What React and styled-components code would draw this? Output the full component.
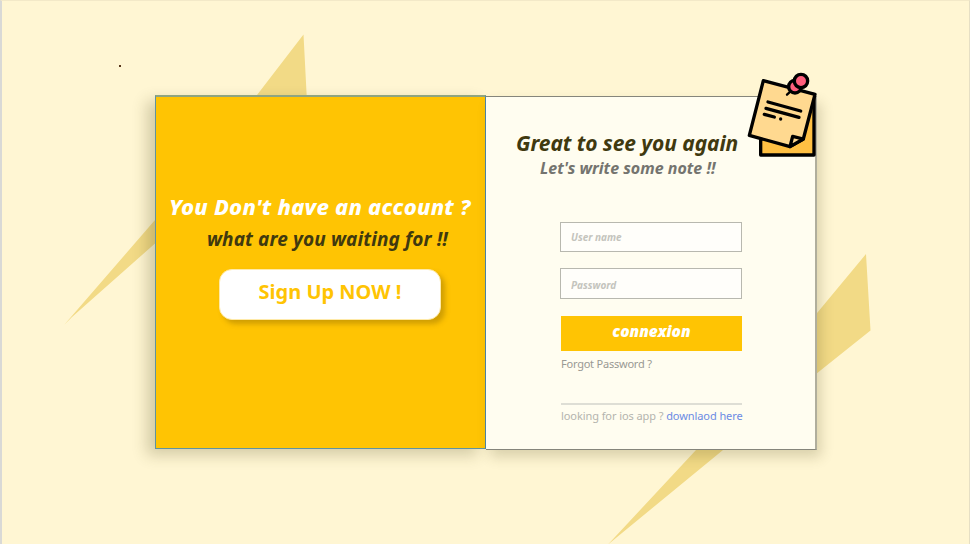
import React from "react";
import styled, { createGlobalStyle } from "styled-components";

const GlobalStyle = createGlobalStyle`
  * { box-sizing: border-box; }
  body { margin: 0; font-family: "Noto Sans", "Open Sans", sans-serif; }
`;

const Page = styled.main`
  position: relative;
  width: 970px;
  height: 544px;
  overflow: hidden;
  padding: 95px 0 0 153px;
  background: #fff6d3;
  border-left: 2px solid #d9d9d6;
  border-top: 1px solid #f3e9c8;
  border-right: 1px solid #e6dfc4;
`;

const Backdrop = styled.svg`
  position: absolute;
  left: -2px;
  top: -1px;
`;

const Card = styled.div`
  position: relative;
  display: flex;
  align-items: flex-start;
  width: 662px;
`;

const Panel = styled.section`
  display: flex;
  flex-direction: column;
  align-items: flex-start;
  flex: none;
`;

const SignUpPanel = styled(Panel)`
  width: 331px;
  height: 354px;
  margin-top: -1px;
  padding: 92px 0 0 13px;
  background: #ffc403;
  border: 1px solid #5f93a0;
  border-top: 2px solid #8fa581;
  border-right-color: #4d86a8;
  box-shadow: -8px 6px 14px rgba(70, 65, 20, 0.24);
`;

const LoginPanel = styled(Panel)`
  width: 331px;
  height: 354px;
  padding: 29px 0 0 30px;
  background: #fffdf0;
  border: 1px solid #85857b;
  border-left: 0;
  border-right: 2px solid #b0ae9c;
  box-shadow: 4px 7px 12px rgba(70, 65, 20, 0.2);
`;

const Line = styled.div`
  height: ${(p) => p.$height}px;
  line-height: ${(p) => p.$height}px;
  margin: ${(p) => p.$top || 0}px 0 0 ${(p) => p.$left || 0}px;
  font-size: ${(p) => p.$size}px;
  font-weight: ${(p) => p.$weight || 700};
  font-style: ${(p) => (p.$upright ? "normal" : "italic")};
  letter-spacing: ${(p) => p.$spacing || 0}px;
  color: ${(p) => p.$color};
  white-space: nowrap;
`;

const SignUpButton = styled.button`
  display: block;
  width: 222px;
  height: 51px;
  margin: 16px 0 0 50px;
  padding: 0 0 6px;
  border: 1px solid #ffeaa8;
  border-radius: 13px;
  background: #fff;
  box-shadow: 4px 4px 5px rgba(120, 90, 0, 0.35);
  color: #ffc403;
  font: 700 20px "Noto Sans", sans-serif;
`;

const Form = styled.form`
  display: flex;
  flex-direction: column;
  width: 182px;
  margin: 44px 0 0 44px;
`;

const Field = styled.input`
  width: 182px;
  height: ${(p) => p.$height}px;
  margin: 0 0 ${(p) => p.$gap}px;
  padding: ${(p) => p.$offset || 0}px 10px 0;
  border: 1px solid #b8b8af;
  border-radius: 0;
  background: #fffefa;
  font: italic 700 10px "Noto Sans", sans-serif;
  &::placeholder { color: #c4c4bd; opacity: 1; }
`;

const SubmitButton = styled.button`
  width: 181px;
  height: 35px;
  margin-left: 1px;
  padding: 0 0 5px;
  border: 0;
  background: #ffc403;
  color: #fff;
  font: italic 800 15.5px "Open Sans", sans-serif;
`;

const Divider = styled.hr`
  width: 181px;
  height: 2px;
  margin: 31px 0 0 1px;
  border: 0;
  background: #deded5;
`;

const Link = styled.a`
  color: #6c8be4;
`;

const NoteIcon = styled.svg`
  position: absolute;
  left: 580px;
  top: -36px;
`;

const Shards = () => (
  <Backdrop width="970" height="544" viewBox="0 0 970 544">
    <g fill="#f2da86">
      <path d="M303.5 34.5 L306.7 96 L307 120 L155 243.5 L72 317 L64.5 324.5 L155 220 L257 95Z" />
      <path d="M866 254 L870.5 330.5 L816 374 L723 450 L608 544.5 L696 450 L816 314.3Z" />
    </g>
    <rect x="119" y="65" width="2" height="2" fill="#573619" />
  </Backdrop>
);

const PinnedNote = () => (
  <NoteIcon width="100" height="110" viewBox="0 0 300 330">
    <g stroke="#000" strokeWidth="10" strokeLinejoin="round" strokeLinecap="round">
      <path d="M77 190 L77 285 L237 285 L237 103Z" fill="#ffc043" />
      <path d="M85 62 L240 103 L205 237 L165 260 L43 226Z" fill="#ffd990" />
      <path d="M205 237 L173 229 L165 260Z" fill="#ffd990" />
      <path d="M99 126 L197 153 M93 145 L192 172 M88 163 L118 171 M137 177 L137 177" fill="none" />
      <path d="M170 91 L156 104" strokeWidth="7" />
      <circle cx="180" cy="80" r="19" fill="#ff5f7d" />
      <circle cx="198" cy="63" r="20" fill="#ff5f7d" />
    </g>
  </NoteIcon>
);

export default function App() {
  return (
    <Page>
      <GlobalStyle />
      <Shards />
      <Card>
        <SignUpPanel>
          <Line $height={34} $size={22} $weight={800} $spacing={0.23} $color="#fff">You Don't have an account ?</Line>
          <Line $height={28} $size={19} $top={2} $left={38} $spacing={0.13} $color="#40390f">what are you waiting for !!</Line>
          <SignUpButton>Sign Up NOW !</SignUpButton>
        </SignUpPanel>
        <LoginPanel>
          <Line $height={34} $size={21} $spacing={-0.08} $color="#40390f">Great to see you again</Line>
          <Line $height={20} $top={-2} $size={16} $left={24} $color="#74746f">Let's write some note !!</Line>
          <Form onSubmit={(e) => e.preventDefault()}>
            <Field $height={30} $gap={16} placeholder="User name" aria-label="User name" />
            <Field $height={31} $gap={17} $offset={2} type="password" placeholder="Password" aria-label="Password" />
            <SubmitButton>connexion</SubmitButton>
            <Line $height={16} $top={5} $left={1} $size={11} $weight={400} $upright $spacing={-0.22} $color="#999993">Forgot Password ?</Line>
            <Divider />
            <Line $height={16} $top={3} $left={1} $size={11} $weight={400} $upright $spacing={-0.08} $color="#b4b4ae">
              looking for ios app ? <Link>downlaod here</Link>
            </Line>
          </Form>
        </LoginPanel>
        <PinnedNote />
      </Card>
    </Page>
  );
}
